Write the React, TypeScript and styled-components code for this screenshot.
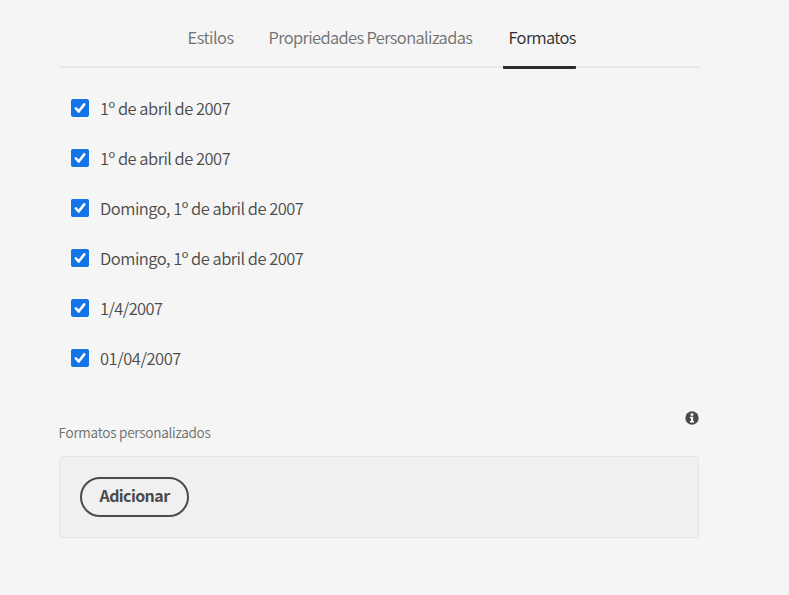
import React from "react";
import styled, { createGlobalStyle } from "styled-components";

const GlobalStyle = createGlobalStyle`
  * { box-sizing: border-box; }
  body {
    margin: 0;
    background: #f5f5f5;
    color: #4b4b4b;
    font-family: "Noto Sans CJK JP", "Noto Sans", sans-serif;
    font-weight: 350;
  }
`;

const Page = styled.main`
  width: 640px;
  height: 595px;
  margin-left: 59px;
  display: flex;
  flex-direction: column;
`;

const TabBar = styled.nav`
  display: flex;
  gap: 30px;
  height: 68px;
  padding-left: 123px;
  border-bottom: 2px solid #e8e8e8;
`;

const Tab = styled.a<{ $active?: boolean; $width: number; $tracking: number }>`
  width: ${(p) => p.$width}px;
  height: 69px;
  padding: 25px 0 0 5.5px;
  font-size: 16.5px;
  line-height: 24px;
  letter-spacing: ${(p) => p.$tracking}px;
  white-space: nowrap;
  color: ${(p) => (p.$active ? "#2c2c2c" : "#707070")};
  background: ${(p) =>
    p.$active
      ? "linear-gradient(#2c2c2c, #2c2c2c) bottom / 100% 3px no-repeat"
      : "none"};
  border-radius: 1px;
`;

const FormatList = styled.ul`
  list-style: none;
  margin: 15px 0 0;
  padding: 0 0 0 12px;
`;

const FormatRow = styled.li`
  display: flex;
  align-items: flex-start;
  gap: 11px;
  height: 50px;
  padding-top: 16px;
`;

const CheckBox = styled.span`
  display: flex;
  flex: none;
  align-items: center;
  justify-content: center;
  width: 18px;
  height: 18px;
  border-radius: 2px;
  background: #1473e6;
`;

const FormatText = styled.span<{ $tracking: number }>`
  margin-top: -3px;
  font-size: 16.5px;
  line-height: 24px;
  letter-spacing: ${(p) => p.$tracking}px;
  white-space: nowrap;
`;

const InfoRow = styled.div`
  display: flex;
  justify-content: flex-end;
  height: 14px;
  margin-top: 28px;
  padding-right: 0.5px;
`;

const FieldLabel = styled.div`
  height: 20px;
  margin: -3px 0 0 -0.5px;
  font-size: 13.6px;
  line-height: 20px;
  letter-spacing: -0.25px;
  color: #6e6e6e;
`;

const Panel = styled.section`
  height: 82px;
  margin-top: 14px;
  padding: 20px;
  border: 1px solid #e4e4e4;
  border-radius: 4px;
  background: #f0f0f0;
`;

const AddButton = styled.button`
  display: block;
  width: 109px;
  height: 40px;
  padding: 0 0 4px;
  border: 2px solid #4b4b4b;
  border-radius: 20px;
  background: transparent;
  color: #4b4b4b;
  font: 700 16px/24px "Noto Sans CJK JP", "Noto Sans", sans-serif;
  letter-spacing: -0.6px;
`;

const formats = [
  { text: "1º de abril de 2007", tracking: -0.5 },
  { text: "1º de abril de 2007", tracking: -0.5 },
  { text: "Domingo, 1º de abril de 2007", tracking: -0.5 },
  { text: "Domingo, 1º de abril de 2007", tracking: -0.5 },
  { text: "1/4/2007", tracking: -0.6 },
  { text: "01/04/2007", tracking: -0.45 },
];

function CheckIcon() {
  return (
    <svg width="12" height="12" viewBox="0 0 12 12">
      <path
        d="M1.9 6.4l2.8 3.1L10.2 2.4"
        fill="none"
        stroke="#fff"
        strokeWidth="2.6"
        strokeLinecap="round"
        strokeLinejoin="round"
      />
    </svg>
  );
}

function InfoIcon() {
  return (
    <svg width="14" height="14" viewBox="0 0 14 14">
      <circle cx="7" cy="7" r="6.7" fill="#4b4b4b" />
      <circle cx="7" cy="3.6" r="1.45" fill="#fff" />
      <path d="M5 5.8H8.1v4.1h1v1.5H5V9.9h1V7.3H5z" fill="#fff" />
    </svg>
  );
}

export default function App() {
  return (
    <>
      <GlobalStyle />
      <Page>
        <TabBar>
          <Tab $width={51} $tracking={-0.5}>Estilos</Tab>
          <Tab $width={210} $tracking={-0.62}>Propriedades Personalizadas</Tab>
          <Tab $width={73} $tracking={-0.65} $active>Formatos</Tab>
        </TabBar>
        <FormatList>
          {formats.map((format, index) => (
            <FormatRow key={index}>
              <CheckBox><CheckIcon /></CheckBox>
              <FormatText $tracking={format.tracking}>{format.text}</FormatText>
            </FormatRow>
          ))}
        </FormatList>
        <InfoRow><InfoIcon /></InfoRow>
        <FieldLabel>Formatos personalizados</FieldLabel>
        <Panel><AddButton type="button">Adicionar</AddButton></Panel>
      </Page>
    </>
  );
}
